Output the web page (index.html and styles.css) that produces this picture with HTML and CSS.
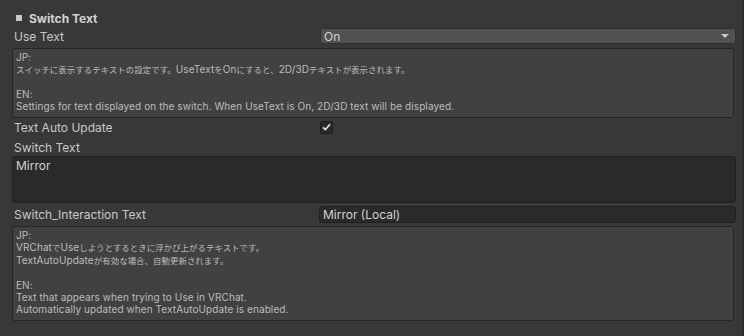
FILE: index.html
```html
<!DOCTYPE html>
<html lang="en">
<head>
    <meta charset="UTF-8">
    <title>Switch Text</title>
    <link rel="stylesheet" href="styles.css">
</head>
<body>

    <div class="inspector">
        <div class="row header">
            <span class="bullet"></span>
            <span>Switch Text</span>
        </div>

        <div class="row use-text">
            <div class="label">Use Text</div>
            <div class="field dropdown">
                <span>On</span>
                <span class="arrow"></span>
            </div>
        </div>

        <div class="helpbox help-one">
            <div>JP:</div>
            <div lang="ja"><span class="jp">スイッチに表示するテキストの設定です。</span>UseText<span class="jp">を</span>On<span class="jp">にすると、</span>2D/3D<span class="jp">テキストが表示されます。</span></div>
            <div>&nbsp;</div>
            <div>EN:</div>
            <div>Settings for text displayed on the switch. When UseText is On, 2D/3D text will be displayed.</div>
        </div>

        <div class="row auto-update">
            <div class="label">Text Auto Update</div>
            <div class="field">
                <span class="checkbox">
                    <svg width="9" height="8" viewBox="0 0 9 8">
                        <path d="M1 4.3 L3.4 6.6 L8 1.2" fill="none" stroke="#e6e6e6" stroke-width="1.6"/>
                    </svg>
                </span>
            </div>
        </div>

        <div class="row switch-label">
            <div class="label">Switch Text</div>
        </div>
        <div class="textarea">Mirror</div>

        <div class="row interaction">
            <div class="label">Switch_Interaction Text</div>
            <div class="field input">Mirror (Local)</div>
        </div>

        <div class="helpbox help-two">
            <div>JP:</div>
            <div lang="ja">VRChat<span class="jp">で</span>Use<span class="jp">しようとするときに浮かび上がるテキストです。</span></div>
            <div lang="ja">TextAutoUpdate<span class="jp">が有効な場合、自動更新されます。</span></div>
            <div>&nbsp;</div>
            <div>EN:</div>
            <div>Text that appears when trying to Use in VRChat.</div>
            <div>Automatically updated when TextAutoUpdate is enabled.</div>
        </div>
    </div>

</body>
</html>
```

FILE: styles.css
```css
body {
    margin: 0;
    background-color: #383838;
    font-family: Inter, "Noto Sans CJK JP", sans-serif;
    font-size: 12px;
    color: #c8c8c8;
}

.inspector {
    height: 336px;
    box-sizing: border-box;
    padding: 10px 6px 0 12px;
    border-right: 2px solid #2c2c2c;
}

.row {
    display: flex;
    align-items: center;
    height: 16px;
}

.header {
    font-weight: bold;
    color: #d2d2d2;
    padding-left: 4px;
}

.bullet {
    width: 6px;
    height: 6px;
    background-color: #c8c8c8;
    margin-right: 7px;
}

.label {
    width: 308px;
    padding-left: 2px;
    box-sizing: border-box;
    flex-shrink: 0;
}

.field {
    flex: 1;
    display: flex;
    align-items: center;
}

.use-text {
    margin-top: 2px;
}

.dropdown {
    height: 16px;
    box-sizing: border-box;
    background-color: #515151;
    border: 1px solid #303030;
    border-radius: 3px;
    padding: 0 6px 0 3px;
    justify-content: space-between;
    color: #d4d4d4;
}

.arrow {
    width: 0;
    height: 0;
    border-left: 4px solid transparent;
    border-right: 4px solid transparent;
    border-top: 4px solid #c8c8c8;
}

.helpbox {
    margin-top: 4px;
    background-color: #414141;
    border: 1px solid #252525;
    border-radius: 3px;
    padding: 2px 3px 5px 3px;
    font-size: 10px;
    line-height: 12px;
    letter-spacing: 0.09px;
    color: #bcbcbc;
}

.jp {
    font-size: 8.4px;
}

.help-one {
    margin-right: 2px;
}

.help-two {
    margin-top: 3px;
    margin-right: 2px;
}

.auto-update {
    margin-top: 1px;
}

.checkbox {
    width: 13px;
    height: 13px;
    box-sizing: border-box;
    background-color: #2b2b2b;
    border: 1px solid #1f1f1f;
    border-radius: 2px;
    display: flex;
    align-items: center;
    justify-content: center;
}

.switch-label {
    margin-top: 4px;
}

.textarea {
    margin-top: 1px;
    height: 47px;
    box-sizing: border-box;
    background-color: #2a2a2a;
    border: 1px solid #212121;
    border-radius: 3px;
    padding: 2px 3px;
    line-height: 14px;
    color: #d2d2d2;
}

.interaction {
    margin-top: 3px;
    height: 17px;
}

.input {
    margin-left: -1px;
    height: 17px;
    box-sizing: border-box;
    background-color: #2a2a2a;
    border: 1px solid #212121;
    border-radius: 3px;
    padding: 0 3px;
    color: #d2d2d2;
}
```
